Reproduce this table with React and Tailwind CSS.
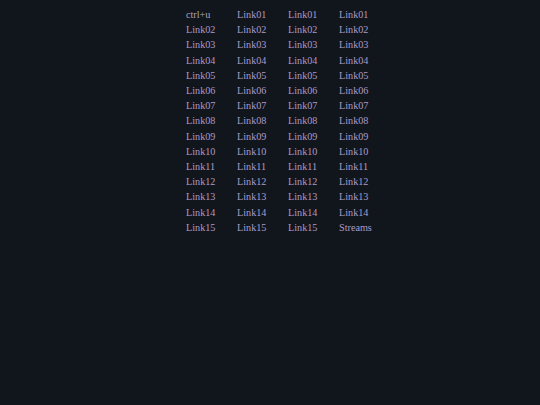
const cols = 4;
const rows = Array.from({ length: 15 }, (_, i) => String(i + 1).padStart(2, '0'));

const cellText = (r, c) => {
  if (r === 0 && c === 0) return 'ctrl+u';
  if (r === 14 && c === 3) return 'Streams';
  return `Link${rows[r]}`;
};

export default function App() {
  return (
    <div className="min-h-[405px] w-full bg-[#11151c] pt-[7px] pl-[186px]" style={{ fontFamily: '"Liberation Serif", serif' }}>
      <div className="grid grid-cols-[51px_51px_51px_60px] text-[10.2px] leading-[15.2px]">
        {rows.map((_, r) =>
          Array.from({ length: cols }, (_, c) => (
            <a
              key={`${r}-${c}`}
              className={r === 0 && c === 0 ? 'text-[#a8a4b8]' : 'text-[#ac9bc8]'}
            >
              {cellText(r, c)}
            </a>
          ))
        )}
      </div>
    </div>
  );
}
